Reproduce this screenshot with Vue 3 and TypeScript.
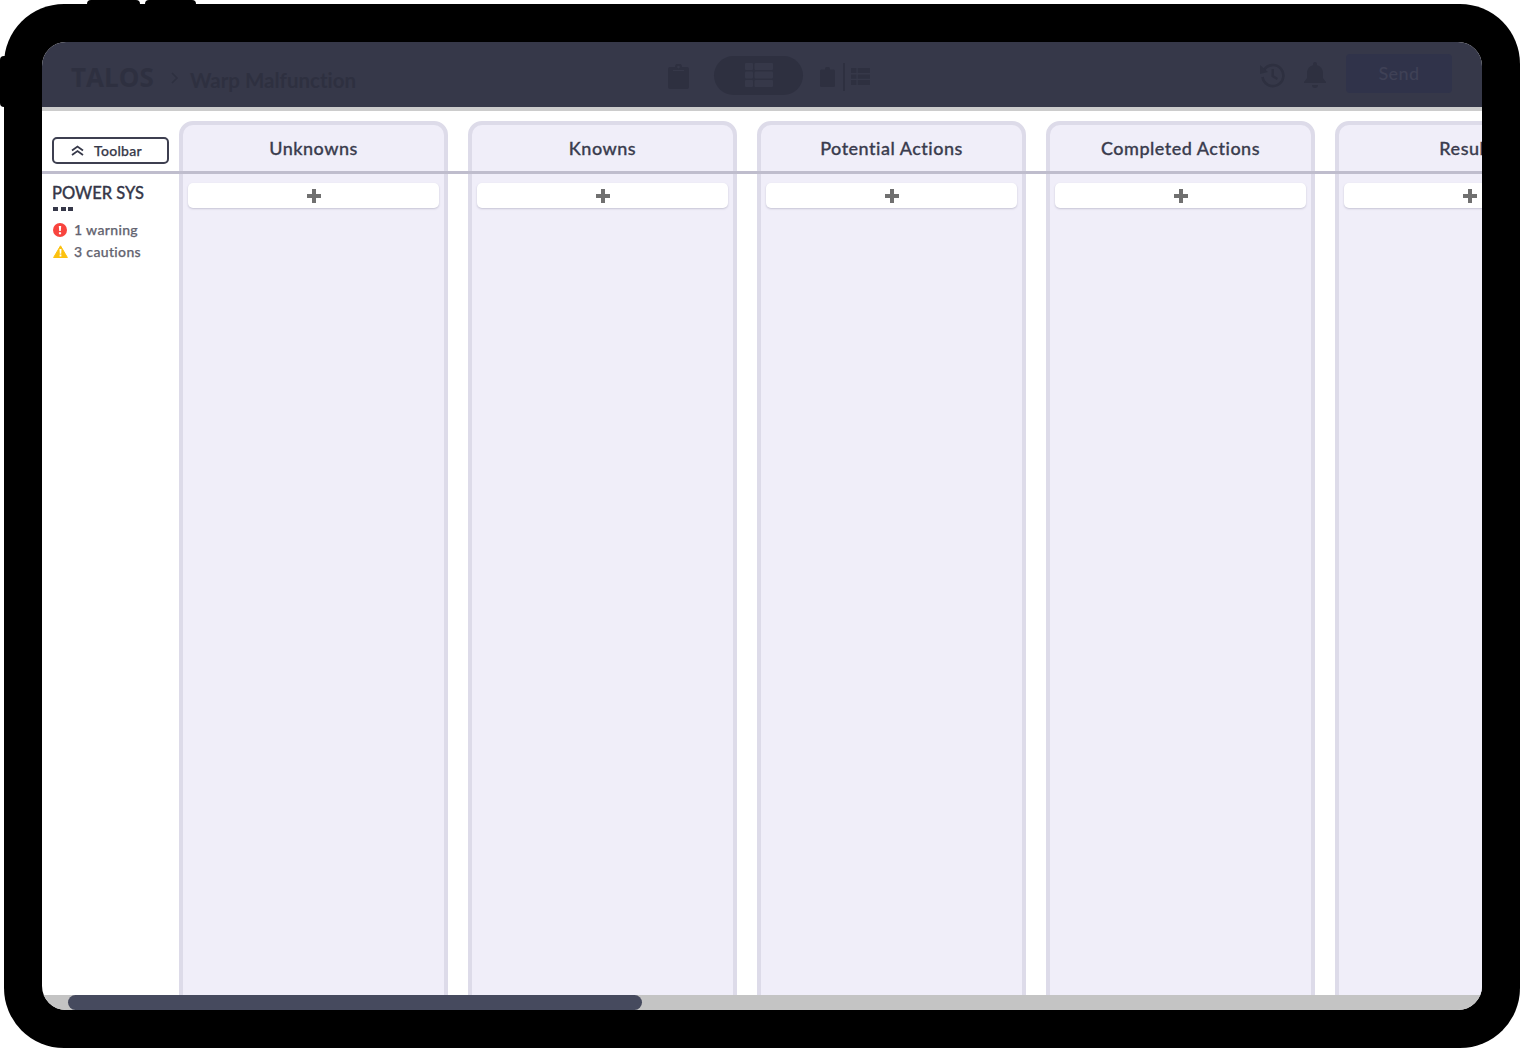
<script setup lang="ts">
const columns = ['Unknowns', 'Knowns', 'Potential Actions', 'Completed Actions', 'Results'];
</script>

<template>
  <div class="page">
    <div class="device">
      <span class="hw hw-top-a"></span>
      <span class="hw hw-top-b"></span>
      <span class="hw hw-left"></span>
      <div class="screen">
        <header class="topbar">
          <div class="crumbs">
            <span class="logo">TALOS</span>
            <svg class="crumb-sep" width="10" height="14" viewBox="0 0 10 14"><path d="M2 2l5 5-5 5" fill="none" stroke="#2e3040" stroke-width="1.6" /></svg>
            <span class="mission">Warp Malfunction</span>
          </div>
          <div class="views">
            <svg width="21" height="25" viewBox="0 0 21 25"><path fill="#2e3040" d="M2 3h5a3.5 3.5 0 0 1 7 0h5a2 2 0 0 1 2 2v18a2 2 0 0 1-2 2H2a2 2 0 0 1-2-2V5a2 2 0 0 1 2-2zm8.500-1.200a1.300 1.300 0 1 0 0 2.600 1.300 1.300 0 0 0 0-2.600zM5 7h11V6H5z" fill-rule="evenodd" /></svg>
            <div class="pill">
              <svg width="28" height="24" viewBox="0 0 28 24"><path fill="#363849" d="M1 0h6a1 1 0 0 1 1 1v5a1 1 0 0 1-1 1H1a1 1 0 0 1-1-1V1a1 1 0 0 1 1-1zm9.500 0H27a1 1 0 0 1 1 1v5a1 1 0 0 1-1 1H10.500a1 1 0 0 1-1-1V1a1 1 0 0 1 1-1zM1 8.500h6a1 1 0 0 1 1 1v5a1 1 0 0 1-1 1H1a1 1 0 0 1-1-1v-5a1 1 0 0 1 1-1zm9.500 0H27a1 1 0 0 1 1 1v5a1 1 0 0 1-1 1H10.500a1 1 0 0 1-1-1v-5a1 1 0 0 1 1-1zM1 17h6a1 1 0 0 1 1 1v5a1 1 0 0 1-1 1H1a1 1 0 0 1-1-1v-5a1 1 0 0 1 1-1zm9.500 0H27a1 1 0 0 1 1 1v5a1 1 0 0 1-1 1H10.500a1 1 0 0 1-1-1v-5a1 1 0 0 1 1-1z" /></svg>
            </div>
            <svg class="small-clip" width="15" height="20" viewBox="0 0 21 25" preserveAspectRatio="none"><path fill="#2e3040" d="M2 3h5a3.500 3.500 0 0 1 7 0h5a2 2 0 0 1 2 2v18a2 2 0 0 1-2 2H2a2 2 0 0 1-2-2V5a2 2 0 0 1 2-2z" /></svg>
            <span class="view-sep"></span>
            <svg width="19" height="17" viewBox="0 0 28 24" preserveAspectRatio="none"><path fill="#2e3040" d="M0 0h8v7H0zM10 0h18v7H10zM0 9h8v6H0zM10 9h18v6H10zM0 17h8v7H0zM10 17h18v7H10z" /></svg>
          </div>
          <div class="actions">
            <svg width="26" height="26" viewBox="0 0 26 26"><path fill="none" stroke="#2e3040" stroke-width="2.600" d="M5 8a10.500 10.500 0 1 1-1.500 7" /><path fill="#2e3040" d="M1 3l8 7-8 2zM12.500 7h2.500v6.500l4 2.500-1.200 2-5.300-3.300z" /></svg>
            <svg class="bell" width="22" height="26" viewBox="0 0 22 26"><path fill="#2e3040" d="M11 0a2 2 0 0 1 2 2v1.200c3.800.9 6 4.100 6 8v5l3 3.800v1H0v-1l3-3.800v-5c0-3.900 2.200-7.100 6-8V2a2 2 0 0 1 2-2zM8 23h6a3 3 0 0 1-6 0z" /></svg>
            <button class="send">Send</button>
          </div>
        </header>
        <div class="strip"></div>

        <div class="board">
          <div class="rule"></div>
          <aside class="side">
            <button class="toolbar-btn">
              <svg width="13" height="11" viewBox="0 0 13 11"><path fill="none" stroke="#363849" stroke-width="1.800" d="M1 5.500l5.500-4 5.500 4M1 10l5.500-4 5.500 4" /></svg>
              <span>Toolbar</span>
            </button>
            <div class="system">POWER SYS</div>
            <div class="dots"><i></i><i></i><i></i></div>
            <div class="status">
              <svg class="warn" width="14" height="14" viewBox="0 0 14 14"><circle cx="7" cy="7" r="7" fill="#f8443e" /><path fill="#fff" d="M5.800 3h2.400l-.4 5H6.200zM5.900 9.200h2.200v2.100H5.900z" /></svg>
              <span>1 warning</span>
            </div>
            <div class="status">
              <svg width="15" height="13" viewBox="0 0 15 13"><path fill="#fcc10f" stroke="#fcc10f" stroke-linejoin="round" d="M7.500 .8L14.400 12.500H.6z" /><path fill="#fff" d="M6.500 4h2l-.3 4.800H6.800zM6.600 9.600h1.800v1.800H6.600z" /></svg>
              <span>3 cautions</span>
            </div>
          </aside>
          <section v-for="name in columns" :key="name" class="column">
            <h2>{{ name }}</h2>
            <button class="add">
              <svg width="14" height="14" viewBox="0 0 14 14"><path fill="#707070" d="M5 0h4v5h5v4H9v5H5V9H0V5h5z" /></svg>
            </button>
          </section>
        </div>

        <div class="track"><div class="thumb"></div></div>
      </div>
    </div>
  </div>
</template>

<style>
html, body {
  margin: 0;
  background: #fff;
}
</style>

<style scoped>
.page {
  width: 1520px;
  height: 1048px;
  padding: 4px 0 0 4px;
  box-sizing: border-box;
  overflow: hidden;
  font-family: Lato, "Open Sans", sans-serif;
  font-variant-ligatures: none;
}
.device {
  position: relative;
  width: 1516px;
  height: 1044px;
  padding: 38px;
  box-sizing: border-box;
  background: #000;
  border-radius: 60px;
}
.hw {
  position: absolute;
  background: #000;
}
.hw-top-a {
  left: 83px;
  top: -4px;
  width: 53px;
  height: 8px;
  border-radius: 4px 4px 0 0;
}
.hw-top-b {
  left: 141px;
  top: -4px;
  width: 51px;
  height: 8px;
  border-radius: 4px 4px 0 0;
}
.hw-left {
  left: -4px;
  top: 52px;
  width: 8px;
  height: 51px;
  border-radius: 4px 0 0 4px;
}
.screen {
  width: 1440px;
  height: 968px;
  display: flex;
  flex-direction: column;
  overflow: hidden;
  background: #fff;
  border-radius: 24px;
}
.topbar {
  flex: none;
  height: 65px;
  display: grid;
  grid-template-columns: 626px 202px 1fr;
  align-items: center;
  background: #363849;
  color: #2e3040;
}
.crumbs {
  display: flex;
  align-items: center;
  padding-left: 29px;
  padding-top: 10px;
}
.logo {
  font-family: "Open Sans", sans-serif;
  font-size: 26px;
  font-weight: 700;
  width: 84px;
  margin-top: -6px;
}
.crumb-sep {
  margin-left: 15px;
  margin-top: -4px;
}
.mission {
  margin-left: 10px;
  font-size: 20.5px;
  font-weight: 700;
}
.views {
  display: flex;
  align-items: center;
  padding-top: 4px;
}
.pill {
  width: 89px;
  height: 39px;
  margin-left: 25px;
  border-radius: 20px;
  background: #2e3040;
  display: flex;
  align-items: center;
  justify-content: center;
  margin-top: -3px;
}
.small-clip {
  margin-left: 17px;
}
.view-sep {
  width: 2px;
  height: 28px;
  margin: 0 6px 0 8px;
  background: #2e3040;
}
.actions {
  display: flex;
  align-items: center;
  justify-content: flex-end;
  padding-right: 30px;
}
.bell {
  margin-left: 19px;
}
.send {
  width: 106px;
  height: 39px;
  margin-left: 20px;
  margin-top: -3px;
  border: 0;
  border-radius: 4px;
  background: #30334a;
  color: #3f4156;
  font: 500 18px Lato, sans-serif;
  letter-spacing: 0.4px;
  padding: 0 0 1px;
}
.strip {
  flex: none;
  height: 4px;
  background: #cccccc;
}
.board {
  position: relative;
  flex: 1;
  min-height: 0;
  display: flex;
  gap: 20px;
  padding-top: 10px;
  overflow: hidden;
}
.rule {
  position: absolute;
  left: 0;
  right: 0;
  top: 60px;
  height: 3px;
  background: #bfbdcd;
}
.side {
  flex: none;
  width: 137px;
  margin-right: -20px;
  box-sizing: border-box;
  padding: 16px 0 0 10px;
  color: #363849;
}
.toolbar-btn {
  width: 117px;
  height: 27px;
  display: flex;
  align-items: center;
  padding: 0 0 0 17px;
  box-sizing: border-box;
  border: 2px solid #3d3f50;
  border-radius: 5px;
  background: #fff;
  color: #363849;
  font: 500 14px Lato, sans-serif;
  letter-spacing: 0.3px;
  -webkit-text-stroke: 0.25px;
}
.toolbar-btn span {
  margin-left: 10px;
}
.system {
  margin-top: 19px;
  font-size: 16.5px;
  font-weight: 500;
  line-height: 20px;
  -webkit-text-stroke: 0.3px;
}
.dots {
  display: flex;
  gap: 2.500px;
  margin: 4px 0 0 1px;
}
.dots i {
  width: 5px;
  height: 4px;
  background: #363849;
}
.status {
  display: flex;
  align-items: center;
  height: 22px;
  color: #63636f;
  font-size: 14px;
  font-weight: 500;
  letter-spacing: 0.35px;
  -webkit-text-stroke: 0.25px;
}
.status svg {
  flex: none;
  margin-left: 1px;
}
.status .warn {
  margin-top: 1px;
}
.status span {
  margin-left: 6px;
}
.status .warn + span {
  margin-left: 7px;
}
.dots + .status {
  margin-top: 7px;
}
.column {
  flex: none;
  width: 269px;
  box-sizing: border-box;
  height: 900px;
  padding: 0 5px;
  border: 4px solid #dddbe9;
  border-radius: 14px 14px 0 0;
  background: #f0eef9;
}
.column h2 {
  margin: 0 0 12px;
  height: 46px;
  line-height: 46px;
  text-align: center;
  white-space: nowrap;
  font-size: 18px;
  font-weight: 500;
  letter-spacing: 0.5px;
  -webkit-text-stroke: 0.3px;
  color: #3a3c4e;
}
.add {
  width: 251px;
  height: 25px;
  display: flex;
  align-items: center;
  justify-content: center;
  padding: 0;
  border: 0;
  border-radius: 5px;
  background: #fff;
  box-shadow: 0 1px 2px rgba(90, 88, 120, 0.28);
}
.track {
  flex: none;
  height: 15px;
  background: #c4c4c4;
  padding-left: 26px;
}
.thumb {
  width: 574px;
  height: 15px;
  border-radius: 8px;
  background: #464a5e;
}
</style>
